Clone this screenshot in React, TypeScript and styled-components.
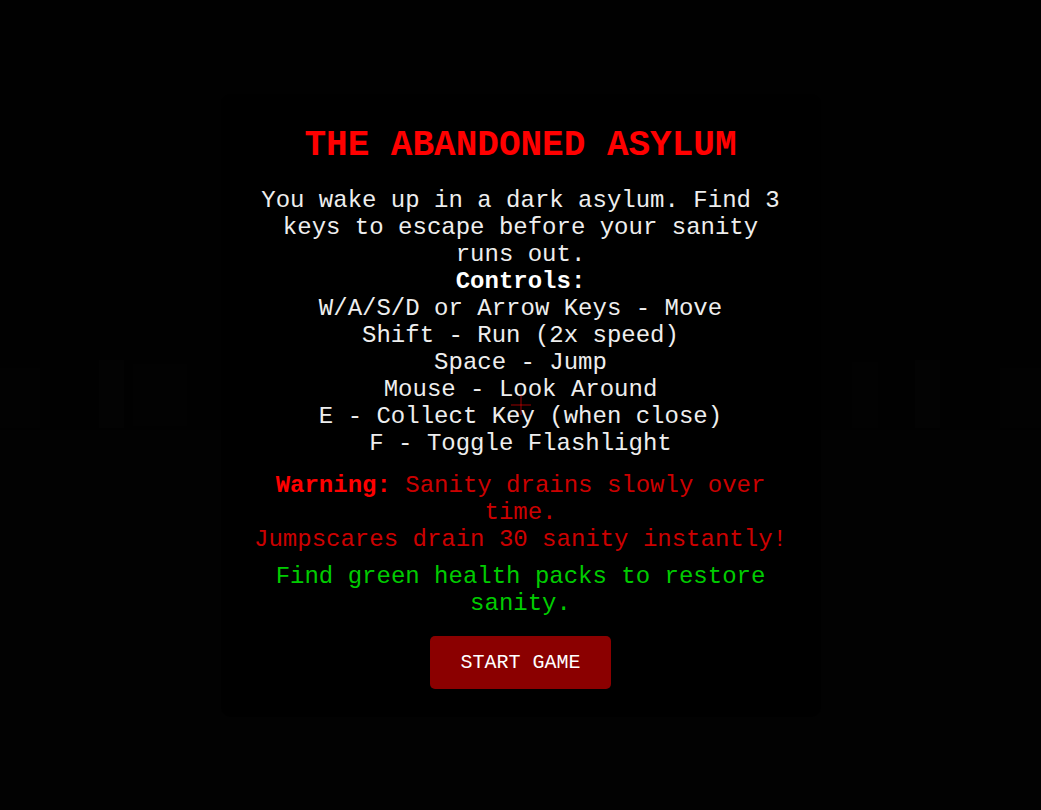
import styled, { createGlobalStyle } from "styled-components";

const GlobalStyle = createGlobalStyle`
  html, body {
    margin: 0;
    padding: 0;
    background: #000;
    overflow: hidden;
  }
  * {
    box-sizing: border-box;
  }
`;

// faint shapes of the dark corridor behind the menu
const doors = [
  { x: 99, y: 360, w: 25, h: 68, c: "#050505" },
  { x: 133, y: 364, w: 54, h: 62, c: "#040404" },
  { x: 0, y: 368, w: 40, h: 60, c: "#030303" },
  { x: 852, y: 362, w: 26, h: 66, c: "#040404" },
  { x: 915, y: 360, w: 25, h: 68, c: "#050505" },
  { x: 1000, y: 368, w: 41, h: 60, c: "#030303" },
];

export default function App() {
  return (
    <>
      <GlobalStyle />
      <Scene>
        <svg width="100%" height="100%" viewBox="0 0 1041 810" preserveAspectRatio="none">
          <rect x="0" y="0" width="1041" height="810" fill="#020202" />
          <rect x="0" y="430" width="1041" height="380" fill="#030303" />
          {doors.map((d, i) => (
            <rect key={i} x={d.x} y={d.y} width={d.w} height={d.h} fill={d.c} />
          ))}
        </svg>
      </Scene>
      <Crosshair />
      <Overlay>
        <Panel>
          <Title>THE ABANDONED ASYLUM</Title>
          <Intro>
            You wake up in a dark asylum. Find 3 keys to escape before your sanity runs out.
            <br />
            <strong>Controls:</strong>
            <br />
            W/A/S/D or Arrow Keys - Move
            <br />
            Shift - Run (2x speed)
            <br />
            Space - Jump
            <br />
            Mouse - Look Around
            <br />
            E - Collect Key (when close)
            <br />
            F - Toggle Flashlight
          </Intro>
          <Warning>
            <strong>Warning:</strong> Sanity drains slowly over time.
            <br />
            Jumpscares drain 30 sanity instantly!
          </Warning>
          <Hint>Find green health packs to restore sanity.</Hint>
          <StartButton>START GAME</StartButton>
        </Panel>
      </Overlay>
    </>
  );
}

const Scene = styled.div`
  position: fixed;
  inset: 0;
  z-index: 0;
  svg {
    display: block;
  }
`;

const Crosshair = styled.div`
  position: fixed;
  left: 50%;
  top: 50%;
  width: 20px;
  height: 20px;
  transform: translate(-50%, -50%);
  z-index: 20;
  pointer-events: none;
  &::before,
  &::after {
    content: "";
    position: absolute;
    background: rgba(255, 0, 0, 0.3);
  }
  &::before {
    left: 0;
    top: 9px;
    width: 20px;
    height: 2px;
  }
  &::after {
    left: 9px;
    top: 0;
    width: 2px;
    height: 20px;
  }
`;

const Overlay = styled.div`
  position: fixed;
  inset: 0;
  z-index: 10;
  display: flex;
  align-items: center;
  justify-content: center;
  background: rgba(0, 0, 0, 0.3);
  font-family: "Liberation Mono", "Courier New", monospace;
`;

const Panel = styled.div`
  width: 600px;
  padding: 31px 30px 28px;
  background: rgba(0, 0, 0, 0.92);
  border-radius: 10px;
  text-align: center;
  color: #eeeeee;
`;

const Title = styled.h1`
  margin: 0 0 21px;
  font-size: 36px;
  font-weight: bold;
  color: #ff0000;
`;

const Intro = styled.p`
  margin: 0;
  font-size: 24px;
  strong {
    color: #ffffff;
  }
`;

const Warning = styled.p`
  margin: 15px 0 0;
  font-size: 24px;
  color: #cc0000;
  strong {
    color: #ff0000;
  }
`;

const Hint = styled.p`
  margin: 10px 0 0;
  font-size: 24px;
  color: #00cc00;
`;

const StartButton = styled.button`
  margin-top: 19px;
  padding: 15px 30px;
  border: none;
  border-radius: 5px;
  background: #8b0000;
  color: #ffffff;
  font-family: "Liberation Mono", "Courier New", monospace;
  font-size: 20px;
  cursor: pointer;
`;
